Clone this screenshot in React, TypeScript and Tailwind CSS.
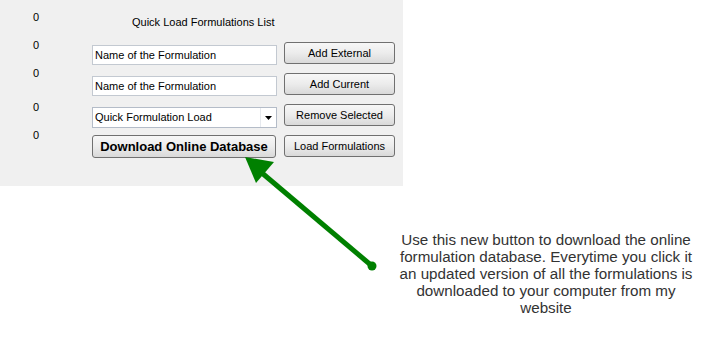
import React from "react";

const ui = { fontFamily: '"Liberation Sans", Arial, sans-serif' };

const zeros = ["mt-[12px]", "mt-[17px]", "mt-[17px]", "mt-[23px]", "mt-[17px]"];

function Btn({ children, bold }: { children: React.ReactNode; bold?: boolean }) {
  return (
    <button
      className={
        "flex items-center justify-center border border-[#707070] rounded-[3px] bg-linear-to-b from-[#f7f7f7] via-[#ececec] to-[#d9d9d9] text-black " +
        (bold ? "w-[184px] h-[23px] text-[13px] font-bold" : "w-[111px] h-[22px] text-[11px]")
      }
      style={ui}
    >
      {children}
    </button>
  );
}

function Field({ text }: { text: string }) {
  return (
    <div className="mt-[3px] w-[185px] h-[20px] border border-[#c3c9d1] bg-white flex items-center pl-[2px] text-[11px] text-black">
      {text}
    </div>
  );
}

export default function App() {
  return (
    <div className="relative w-[723px] h-[342px] bg-white overflow-hidden" style={ui}>
      <div className="w-[403px] h-[186px] bg-[#f0f0f0] flex">
        <div className="w-[92px] flex flex-col items-start pl-[33px] text-[11px] text-black">
          {zeros.map((m, i) => (
            <div key={i} className={m + " leading-[11px]"}>
              0
            </div>
          ))}
        </div>
        <div className="flex flex-col">
          <div className="mt-[16px] ml-[40px] h-[26px] text-[11px] leading-[13px] text-black">
            Quick Load Formulations List
          </div>
          <div className="flex flex-col gap-[8px]">
            <div className="flex items-start gap-[7px] h-[23px]">
              <Field text="Name of the Formulation" />
              <Btn>Add External</Btn>
            </div>
            <div className="flex items-start gap-[7px] h-[23px]">
              <Field text="Name of the Formulation" />
              <Btn>Add Current</Btn>
            </div>
            <div className="flex items-start gap-[7px] h-[23px]">
              <div className="mt-[3px] w-[185px] h-[21px] border border-[#b4bcc8] bg-white flex text-[11px] text-black">
                <div className="flex-1 flex items-center pl-[2px]">Quick Formulation Load</div>
                <div className="w-[16px] border-l border-[#e6e9ee] flex items-center justify-center">
                  <svg width="7" height="4" viewBox="0 0 7 4">
                    <path d="M0 0h7L3.5 4z" fill="#000" />
                  </svg>
                </div>
              </div>
              <Btn>Remove Selected</Btn>
            </div>
            <div className="flex items-start gap-[8px] h-[23px]">
              <Btn bold>Download Online Database</Btn>
              <Btn>Load Formulations</Btn>
            </div>
          </div>
        </div>
      </div>

      <div className="ml-[386px] mt-[45px] w-[320px] text-center text-[15.2px] leading-[17px] text-[#333]">
        Use this new button to download the online
        <br />
        formulation database. Everytime you click it
        <br />
        an updated version of all the formulations is
        <br />
        downloaded to your computer from my
        <br />
        website
      </div>

      <svg className="absolute inset-0 pointer-events-none" width="723" height="342">
        <line x1="372" y1="266" x2="262" y2="173" stroke="#008000" strokeWidth="5" />
        <circle cx="372" cy="266" r="4.5" fill="#008000" />
        <polygon points="245,157 274,162 256,183" fill="#008000" />
      </svg>
    </div>
  );
}
